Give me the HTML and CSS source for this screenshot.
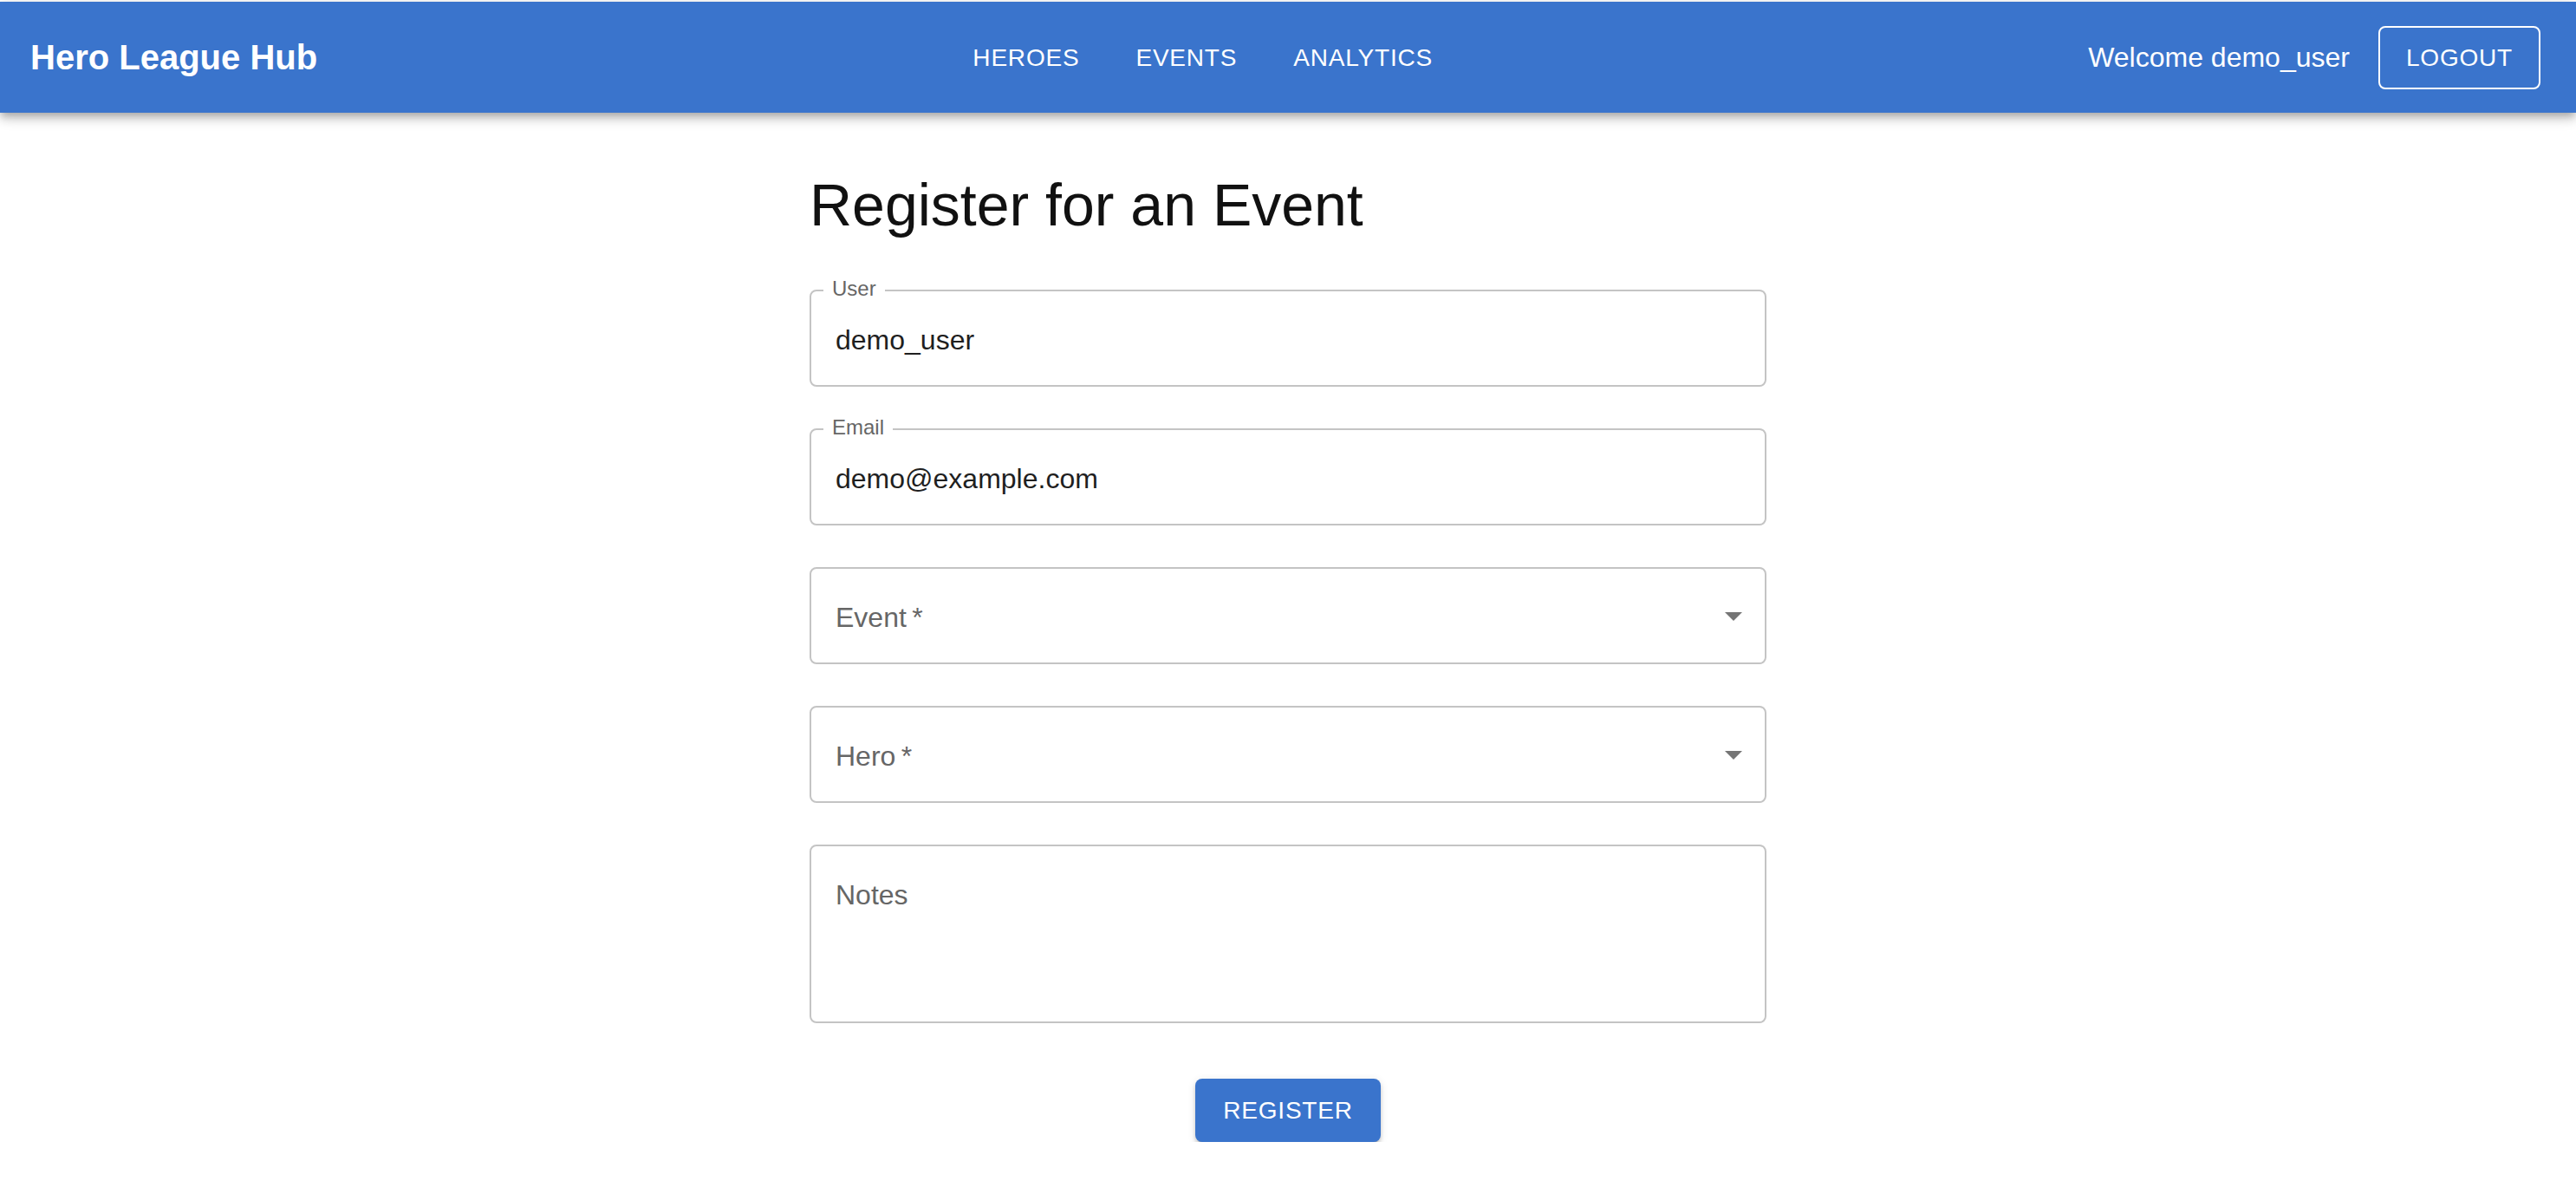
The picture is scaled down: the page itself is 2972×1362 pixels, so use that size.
FILE: index.html
```html
<!DOCTYPE html>
<html lang="en">
<head>
<meta charset="utf-8">
<title>Hero League Hub</title>
<link rel="stylesheet" href="styles.css">
</head>
<body>
<header class="appbar">
  <div class="brand">Hero League Hub</div>
  <nav class="nav">
    <a class="nav-btn">HEROES</a>
    <a class="nav-btn">EVENTS</a>
    <a class="nav-btn">ANALYTICS</a>
  </nav>
  <div class="user-area">
    <span class="welcome">Welcome demo_user</span>
    <button class="logout">LOGOUT</button>
  </div>
</header>

<main class="container">
  <h1 class="page-title">Register for an Event</h1>
  <form class="form">
    <div class="field">
      <span class="float-label">User</span>
      <div class="value">demo_user</div>
    </div>
    <div class="field">
      <span class="float-label">Email</span>
      <div class="value">demo@example.com</div>
    </div>
    <div class="field select">
      <div class="placeholder">Event<span class="req">&thinsp;*</span></div>
      <svg class="arrow" viewBox="0 0 24 24" width="48" height="48"><path d="M7 10l5 5 5-5z"/></svg>
    </div>
    <div class="field select">
      <div class="placeholder">Hero<span class="req">&thinsp;*</span></div>
      <svg class="arrow" viewBox="0 0 24 24" width="48" height="48"><path d="M7 10l5 5 5-5z"/></svg>
    </div>
    <div class="field notes">
      <div class="placeholder">Notes</div>
    </div>
    <div class="actions">
      <button type="button" class="register">REGISTER</button>
    </div>
  </form>
</main>
</body>
</html>
```

FILE: styles.css
```css
* { box-sizing: border-box; }

html, body {
  margin: 0;
  background: #ffffff;
}

body {
  padding-top: 2px;
  font-family: "Liberation Sans", Arial, Helvetica, sans-serif;
  color: rgba(0, 0, 0, 0.87);
}

.appbar {
  height: 128px;
  display: flex;
  align-items: center;
  padding: 0 41px 0 35px;
  background: #3a74cc;
  color: #ffffff;
  box-shadow: 0 4px 8px -2px rgba(0,0,0,0.2), 0 8px 10px 0 rgba(0,0,0,0.14), 0 2px 20px 0 rgba(0,0,0,0.12);
  position: relative;
  z-index: 2;
}

.brand {
  font-size: 40px;
  font-weight: 700;
  line-height: 64px;
  white-space: nowrap;
}

.nav {
  flex: 1;
  display: flex;
  justify-content: center;
  gap: 33px;
}

.nav-btn {
  font-size: 28px;
  line-height: 49px;
  letter-spacing: 0.8px;
  padding: 12px 16px;
  color: #ffffff;
  text-decoration: none;
}

.user-area {
  display: flex;
  align-items: center;
}

.welcome {
  font-size: 32px;
  line-height: 48px;
  white-space: nowrap;
}

.logout {
  margin-left: 33px;
  font-family: inherit;
  font-size: 28px;
  line-height: 49px;
  letter-spacing: 0.8px;
  padding: 10px 30px;
  background: transparent;
  color: #ffffff;
  border: 2px solid #ffffff;
  border-radius: 8px;
}

.container {
  width: 1104px;
  margin: 64px auto 0;
}

.page-title {
  margin: 0 0 24px;
  font-size: 68px;
  font-weight: 400;
  line-height: 84px;
  color: #111111;
}

.form {
  display: flex;
  flex-direction: column;
  gap: 48px;
  padding-top: 32px;
}

.field {
  position: relative;
  height: 112px;
  border: 2px solid #c4c4c4;
  border-radius: 8px;
  padding: 33px 28px;
}

.float-label {
  position: absolute;
  left: 14px;
  top: -15px;
  padding: 0 10px;
  background: #ffffff;
  font-size: 24px;
  line-height: 24px;
  color: #666666;
}

.value {
  font-size: 32px;
  line-height: 46px;
  color: #1f1f1f;
}

.placeholder {
  font-size: 32px;
  line-height: 46px;
  color: #666666;
}

.select {
  padding-right: 64px;
}

.arrow {
  position: absolute;
  right: 12px;
  top: calc(50% - 24px);
  fill: #757575;
}

.notes {
  height: 206px;
}

.actions {
  display: flex;
  justify-content: center;
  margin-top: 16px;
}

.register {
  font-family: inherit;
  font-size: 28px;
  line-height: 49px;
  letter-spacing: 0.8px;
  padding: 12px 32px;
  background: #3a74cc;
  color: #ffffff;
  border: none;
  border-radius: 8px;
  box-shadow: 0 6px 2px -4px rgba(0,0,0,0.2), 0 4px 4px 0 rgba(0,0,0,0.14), 0 2px 10px 0 rgba(0,0,0,0.12);
}
```
